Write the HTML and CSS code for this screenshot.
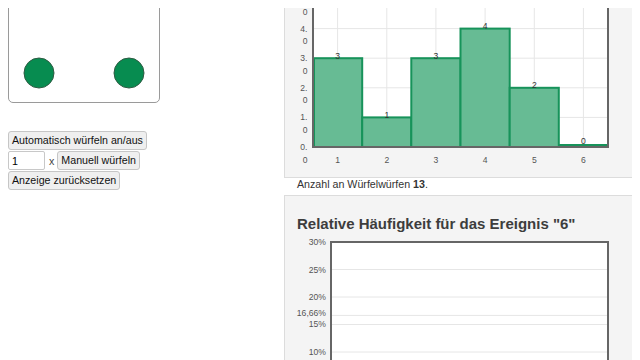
FILE: index.html
```html
<!DOCTYPE html>
<html lang="de">

<head>
    <meta charset="UTF-8">
    <meta name="viewport" content="width=device-width, initial-scale=1.0">
    <title>Würfeln</title>
    <link rel="stylesheet" href="styles.css">
</head>

<body>
    <div class="page">
        <div class="left">
            <!-- Würfel mit Augenzahl 4 -->
            <div class="die">
                <svg width="150" height="150" viewBox="0 0 150 150">
                    <circle class="pip" cx="30" cy="29" r="15"/>
                    <circle class="pip" cx="120" cy="29" r="15"/>
                    <circle class="pip" cx="30" cy="121" r="15"/>
                    <circle class="pip" cx="120" cy="121" r="15"/>
                </svg>
            </div>
            <div class="controls">
                <div class="row"><button>Automatisch würfeln an/aus</button></div>
                <div class="row">
                    <input class="times" type="text" value="1">
                    <span class="x">x</span>
                    <button>Manuell würfeln</button>
                </div>
                <div class="row"><button>Anzeige zurücksetzen</button></div>
            </div>
        </div>

        <div class="right">
            <div class="panel">
                <h2>Absolute Häufigkeit der Augenzahlen</h2>
                <svg class="chart" width="324" height="172" viewBox="0 0 324 172">
                    <rect x="16" y="5" width="295" height="148" fill="#fff"/>
                    <g class="grid">
                        <line x1="16" y1="123.4" x2="311" y2="123.4"/>
                        <line x1="16" y1="93.8" x2="311" y2="93.8"/>
                        <line x1="16" y1="64.2" x2="311" y2="64.2"/>
                        <line x1="16" y1="34.6" x2="311" y2="34.6"/>
                        <line x1="40.6" y1="5" x2="40.6" y2="153"/>
                        <line x1="89.8" y1="5" x2="89.8" y2="153"/>
                        <line x1="138.9" y1="5" x2="138.9" y2="153"/>
                        <line x1="188.1" y1="5" x2="188.1" y2="153"/>
                        <line x1="237.3" y1="5" x2="237.3" y2="153"/>
                        <line x1="286.4" y1="5" x2="286.4" y2="153"/>
                    </g>
                    <g class="bars">
                        <rect x="17" y="64.2" width="48.2" height="88.8"/>
                        <rect x="65.2" y="123.4" width="49.1" height="29.6"/>
                        <rect x="114.3" y="64.2" width="49.2" height="88.8"/>
                        <rect x="163.5" y="34.6" width="49.2" height="118.4"/>
                        <rect x="212.7" y="93.8" width="49.1" height="59.2"/>
                    </g>
                    <rect class="frame" x="16" y="5" width="295" height="148"/>
                    <line class="zero" x1="261.8" y1="151" x2="310" y2="151"/>
                    <g class="values">
                        <text x="40.6" y="64.7">3</text>
                        <text x="89.8" y="123.9">1</text>
                        <text x="138.9" y="64.7">3</text>
                        <text x="188.1" y="35.1">4</text>
                        <text x="237.3" y="94.3">2</text>
                        <text x="286.4" y="150">0</text>
                    </g>
                    <g class="ylabels">
                        <text x="10.5" y="156"><tspan>0.</tspan><tspan x="10.5" dy="12.5">0</tspan></text>
                        <text x="10.5" y="126.4"><tspan>1.</tspan><tspan x="10.5" dy="12.5">0</tspan></text>
                        <text x="10.5" y="96.8"><tspan>2.</tspan><tspan x="10.5" dy="12.5">0</tspan></text>
                        <text x="10.5" y="67.2"><tspan>3.</tspan><tspan x="10.5" dy="12.5">0</tspan></text>
                        <text x="10.5" y="37.6"><tspan>4.</tspan><tspan x="10.5" dy="12.5">0</tspan></text>
                        <text x="10.5" y="8"><tspan>5.</tspan><tspan x="10.5" dy="12.5">0</tspan></text>
                    </g>
                    <g class="xlabels">
                        <text x="40.6" y="168.5">1</text>
                        <text x="89.8" y="168.5">2</text>
                        <text x="138.9" y="168.5">3</text>
                        <text x="188.1" y="168.5">4</text>
                        <text x="237.3" y="168.5">5</text>
                        <text x="286.4" y="168.5">6</text>
                    </g>
                </svg>
            </div>
            <p class="count">Anzahl an Würfelwürfen <b>13</b>.</p>

            <div class="panel">
                <h2>Relative Häufigkeit für das Ereignis "6"</h2>
                <svg class="chart" width="324" height="200" viewBox="0 0 324 200">
                    <rect x="34" y="4" width="277" height="165" fill="#fff"/>
                    <g class="grid">
                        <line x1="34" y1="31.5" x2="311" y2="31.5"/>
                        <line x1="34" y1="59" x2="311" y2="59"/>
                        <line x1="34" y1="77.4" x2="311" y2="77.4"/>
                        <line x1="34" y1="86.5" x2="311" y2="86.5"/>
                        <line x1="34" y1="114" x2="311" y2="114"/>
                        <line x1="34" y1="141.5" x2="311" y2="141.5"/>
                    </g>
                    <rect class="frame" x="34" y="4" width="277" height="165"/>
                    <g class="ylabels">
                        <text x="29" y="7">30%</text>
                        <text x="29" y="34.5">25%</text>
                        <text x="29" y="62">20%</text>
                        <text x="29" y="78.2">16,66%</text>
                        <text x="29" y="88.8">15%</text>
                        <text x="29" y="117">10%</text>
                        <text x="29" y="144.5">5%</text>
                        <text x="29" y="172">0%</text>
                    </g>
                </svg>
            </div>
        </div>
    </div>
</body>

</html>
```

FILE: styles.css
```css
html {
    overflow: hidden;
}

body {
    margin: 8px;
    font-family: "Liberation Sans", Arial, sans-serif;
    font-size: 10.67px;
    color: #222;
}

.page {
    display: flex;
    align-items: flex-start;
    margin-top: -57px;
}

.left {
    width: 276px;
    flex-shrink: 0;
}

.die {
    width: 152px;
    height: 152px;
    box-sizing: border-box;
    border: 1px solid #9a9a9a;
    border-radius: 5px;
    background-color: #fff;
}

.die svg {
    display: block;
}

.pip {
    fill: #078c50;
    stroke: #2f5b43;
    stroke-width: 1;
}

.controls {
    margin-top: 28px;
}

.row {
    display: flex;
    align-items: center;
    margin-bottom: 1px;
}

button {
    font-family: inherit;
    font-size: 10.67px;
    line-height: 13px;
    padding: 2px 3px;
    color: #111;
    border: 1px solid #c6c6c6;
    border-radius: 3px;
    background-color: #efefef;
}

.times {
    width: 37px;
    height: 19px;
    box-sizing: border-box;
    padding: 0 3px;
    font-family: inherit;
    font-size: 10.67px;
    border: 1px solid #c8c8c8;
    border-radius: 2px;
}

.x {
    padding: 0 3px 0 4px;
    color: #444;
}

.right {
    width: 350px;
    flex-shrink: 0;
}

.panel {
    padding: 17px 12px 11px;
    border: 1px solid #dcdcdc;
    background-color: #f4f4f4;
}

.panel h2 {
    margin: 0 0 3px;
    font-size: 15px;
    line-height: 22px;
    font-weight: bold;
    color: #3d3d3d;
}

.chart {
    display: block;
    overflow: visible;
}

.chart text {
    font-family: "Liberation Sans", Arial, sans-serif;
    font-size: 8.6px;
    fill: #555;
}

.grid line {
    stroke: #e6e6e6;
    stroke-width: 1;
}

.bars rect {
    fill: #67bb94;
    stroke: #17935a;
    stroke-width: 2;
}

.zero {
    stroke: #17935a;
    stroke-width: 2;
}

.frame {
    fill: none;
    stroke: #666;
    stroke-width: 2;
}

.values text,
.xlabels text {
    text-anchor: middle;
}

.values text {
    fill: #333;
}

.ylabels text {
    text-anchor: end;
}

.count {
    margin: 0 0 5px;
    padding-left: 13px;
    line-height: 12px;
    color: #333;
}
```
